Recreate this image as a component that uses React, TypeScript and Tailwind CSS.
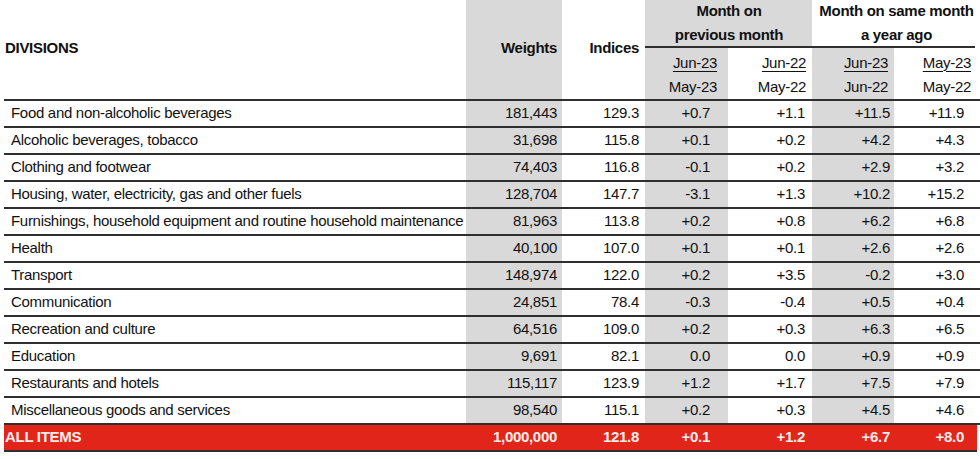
import React from 'react';

interface Row {
  name: string;
  weight: string;
  index: string;
  mom: string;
  momPrev: string;
  yoy: string;
  yoyPrev: string;
}

const rows: Row[] = [
  { name: 'Food and non-alcoholic beverages', weight: '181,443', index: '129.3', mom: '+0.7', momPrev: '+1.1', yoy: '+11.5', yoyPrev: '+11.9' },
  { name: 'Alcoholic beverages, tobacco', weight: '31,698', index: '115.8', mom: '+0.1', momPrev: '+0.2', yoy: '+4.2', yoyPrev: '+4.3' },
  { name: 'Clothing and footwear', weight: '74,403', index: '116.8', mom: '-0.1', momPrev: '+0.2', yoy: '+2.9', yoyPrev: '+3.2' },
  { name: 'Housing, water, electricity, gas and other fuels', weight: '128,704', index: '147.7', mom: '-3.1', momPrev: '+1.3', yoy: '+10.2', yoyPrev: '+15.2' },
  { name: 'Furnishings, household equipment and routine household maintenance', weight: '81,963', index: '113.8', mom: '+0.2', momPrev: '+0.8', yoy: '+6.2', yoyPrev: '+6.8' },
  { name: 'Health', weight: '40,100', index: '107.0', mom: '+0.1', momPrev: '+0.1', yoy: '+2.6', yoyPrev: '+2.6' },
  { name: 'Transport', weight: '148,974', index: '122.0', mom: '+0.2', momPrev: '+3.5', yoy: '-0.2', yoyPrev: '+3.0' },
  { name: 'Communication', weight: '24,851', index: '78.4', mom: '-0.3', momPrev: '-0.4', yoy: '+0.5', yoyPrev: '+0.4' },
  { name: 'Recreation and culture', weight: '64,516', index: '109.0', mom: '+0.2', momPrev: '+0.3', yoy: '+6.3', yoyPrev: '+6.5' },
  { name: 'Education', weight: '9,691', index: '82.1', mom: '0.0', momPrev: '0.0', yoy: '+0.9', yoyPrev: '+0.9' },
  { name: 'Restaurants and hotels', weight: '115,117', index: '123.9', mom: '+1.2', momPrev: '+1.7', yoy: '+7.5', yoyPrev: '+7.9' },
  { name: 'Miscellaneous goods and services', weight: '98,540', index: '115.1', mom: '+0.2', momPrev: '+0.3', yoy: '+4.5', yoyPrev: '+4.6' },
];

const total: Row = { name: 'ALL ITEMS', weight: '1,000,000', index: '121.8', mom: '+0.1', momPrev: '+1.2', yoy: '+6.7', yoyPrev: '+8.0' };

const grid = 'grid grid-cols-[462px_96px_83px_83px_84px_82px_81px]';
const font = { fontFamily: '"Liberation Sans", Arial, sans-serif' };

function Period({ top, bottom, className }: { top: string; bottom: string; className: string }) {
  return (
    <div className={`flex flex-col items-end justify-center leading-[24px] pt-[2px] ${className}`}>
      <span className="underline underline-offset-[3px] decoration-1">{top}</span>
      <span>{bottom}</span>
    </div>
  );
}

export default function App() {
  return (
    <div className="w-[980px] h-[459px] bg-white text-[#111] text-[15px] tracking-[-0.3px] pl-[4px]" style={font}>
      <div className={`${grid} grid-rows-[48px_51px] border-b-2 border-[#2f2f2f]`}>
        <div className="row-span-2 flex items-center pl-[1px] pb-[2px] font-bold">DIVISIONS</div>
        <div className="row-span-2 flex items-center justify-end pr-[5px] pb-[2px] font-bold bg-[#d9d9d9]">Weights</div>
        <div className="row-span-2 flex items-center justify-end pr-[6px] pb-[2px] font-bold">Indices</div>
        <div className="col-span-2 flex flex-col items-center justify-center font-bold leading-[24px] bg-[#d9d9d9] border-b-2 border-[#2f2f2f] pl-[1px] whitespace-nowrap">
          <span>Month on</span>
          <span>previous month</span>
        </div>
        <div className="col-span-2 flex flex-col items-center justify-center font-bold leading-[24px] border-b-2 border-[#2f2f2f] pl-[6px] whitespace-nowrap">
          <span>Month on same month</span>
          <span>a year ago</span>
        </div>
        <Period top="Jun-23" bottom="May-23" className="bg-[#d9d9d9] pr-[11px]" />
        <Period top="Jun-22" bottom="May-22" className="pr-[6px]" />
        <Period top="Jun-23" bottom="Jun-22" className="bg-[#d9d9d9] pr-[6px]" />
        <Period top="May-23" bottom="May-22" className="pr-[4px]" />
      </div>

      {rows.map((r) => (
        <div key={r.name} className={`${grid} h-[27px] border-b-2 border-[#2f2f2f]`}>
          <div className="flex items-center pl-[7px] whitespace-nowrap">{r.name}</div>
          <div className="flex items-center justify-end pr-[5px] bg-[#d9d9d9]">{r.weight}</div>
          <div className="flex items-center justify-end pr-[6px]">{r.index}</div>
          <div className="flex items-center justify-end pr-[18px] bg-[#d9d9d9]">{r.mom}</div>
          <div className="flex items-center justify-end pr-[7px]">{r.momPrev}</div>
          <div className="flex items-center justify-end pr-[4px] bg-[#d9d9d9]">{r.yoy}</div>
          <div className="flex items-center justify-end pr-[11px]">{r.yoyPrev}</div>
        </div>
      ))}

      <div className={`${grid} h-[27px] w-[973px] bg-[#e1251b] text-[#fdeeec] font-bold border-b-2 border-[#2f2f2f]`}>
        <div className="flex items-center pl-[1px]">{total.name}</div>
        <div className="flex items-center justify-end pr-[5px]">{total.weight}</div>
        <div className="flex items-center justify-end pr-[6px]">{total.index}</div>
        <div className="flex items-center justify-end pr-[18px]">{total.mom}</div>
        <div className="flex items-center justify-end pr-[7px]">{total.momPrev}</div>
        <div className="flex items-center justify-end pr-[4px]">{total.yoy}</div>
        <div className="flex items-center justify-end pr-[11px]">{total.yoyPrev}</div>
      </div>
    </div>
  );
}
